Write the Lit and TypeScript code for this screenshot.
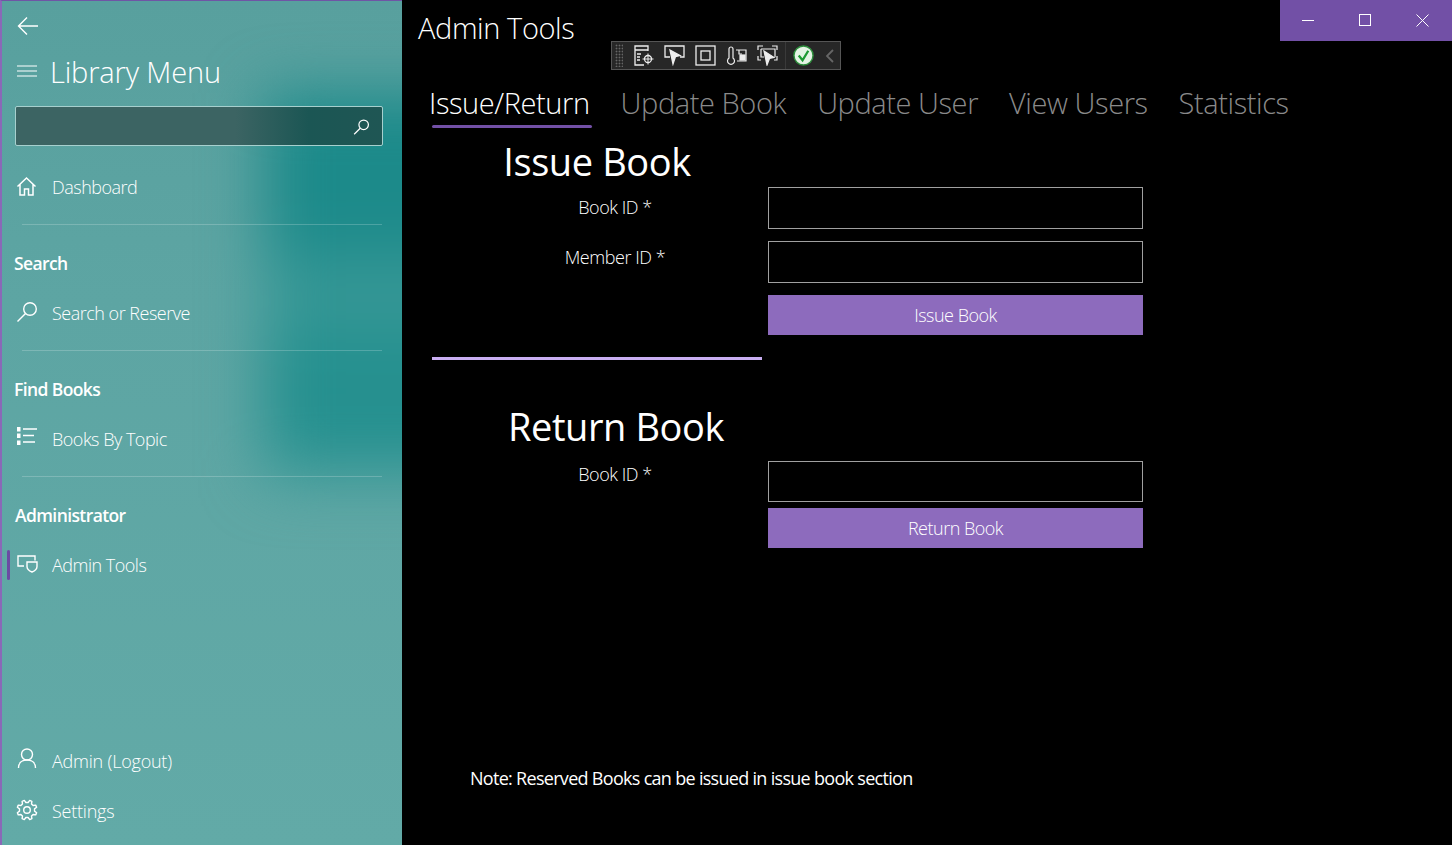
import { LitElement, html, css, svg } from "lit";
import { customElement } from "lit/decorators.js";

const icon = (body: unknown, size = 22, vb = 22) => html`<svg class="ic" width=${size} height=${size} viewBox="0 0 ${vb} ${vb}" fill="none" stroke="currentColor" stroke-width="1.4">${body}</svg>`;

const gearPath = () => {
  const cx = 12, cy = 10, pts: string[] = [];
  const n = 8;
  for (let i = 0; i < n; i++) {
    const a = (i / n) * Math.PI * 2 + Math.PI / 8;
    const s = Math.PI / n;
    const p = (ang: number, r: number) => `${(cx + r * Math.cos(ang)).toFixed(2)} ${(cy + r * Math.sin(ang)).toFixed(2)}`;
    pts.push(p(a - s * 0.62, 7.6), p(a - s * 0.3, 10), p(a + s * 0.3, 10), p(a + s * 0.62, 7.6));
  }
  return "M" + pts.join("L") + "Z";
};

const home = svg`<path d="M2.500 10.500 11.500 2l9 8.500M5 8.500V19h4.500v-6h4v6H18V8.500" stroke-width="1.500"/>`;
const search = svg`<circle cx="15" cy="7" r="6.300"/><path d="M10.500 11.500 2.500 19.500"/>`;
const list = svg`<path d="M2 -1h3.500v4.500H2zM2 5.500h3.500V10H2zM2 12.500h3.500V17H2z" fill="currentColor" stroke="none"/><path d="M8 1h14M8 7.500h11M8 14h12"/>`;
const shield = svg`<path d="M9 12H3V2h17v4.500M12 8h10v4.500c0 3-2.700 4.600-5 5.500-2.300-.9-5-2.500-5-5.500z"/>`;
const user = svg`<circle cx="12" cy="4.500" r="5.500"/><path d="M3.500 18c0-5 3.500-8 8.500-8s8.500 3 8.500 8"/>`;
const gear = svg`<path d=${gearPath()} stroke-linejoin="round"/><circle cx="12" cy="10" r="3.300"/>`;

@customElement("app-root")
export class AppRoot extends LitElement {
  static styles = css`
    :host { display: block; width: 1452px; height: 845px; overflow: hidden; background: #000; font-family: "Open Sans", "Noto Sans", sans-serif; color: #fff; }
    .app { display: grid; grid-template-columns: 402px 1fr; height: 845px; position: relative; }
    .side { box-sizing: border-box; height: 845px; border-left: 2px solid #8a68b8; border-top: 1px solid #6f55a5; display: flex; flex-direction: column; color: #fff; position: relative; overflow: hidden;
      background: linear-gradient(180deg, #58a09e 0, #5da5a3 300px, #62aaa7 845px); }
    .side::before { content: ""; position: absolute; left: 262px; top: 92px; width: 230px; height: 385px; filter: blur(30px);
      background: linear-gradient(180deg, #1c8a8a 0 36%, #3c9a98 52%, #25908f 66%, #25908f 90%, #3c9a98 100%); }
    .side > * { position: relative; }
    .back { height: 48px; padding: 13px 0 0 14px; box-sizing: border-box; }
    .ttl { display: flex; align-items: center; height: 44px; padding-left: 14px; gap: 10px; font-size: 29px; font-weight: 300; letter-spacing: -.15px; }
    .searchbox { box-sizing: border-box; margin: 13px 0 0 13px; width: 368px; height: 40px; border: 1px solid #a7d0ce; border-radius: 2px; background: linear-gradient(90deg, #3c6463, #3c6463 60%, #1b5654 80%, #1f5654); display: flex; align-items: center; justify-content: flex-end; padding-right: 11px; }
    .item { display: flex; align-items: center; height: 40px; padding-left: 13px; gap: 15px; font-size: 18px; font-weight: 300; letter-spacing: -.5px; position: relative; }
    .item.first { margin-top: 21px; }
    .item.wide { letter-spacing: -.22px; }
    .ic { flex: none; overflow: visible; }
    .div { height: 1px; margin: 17px 20px 0 20px; background: rgba(255,255,255,.2); }
    .hdr { font-size: 17.500px; font-weight: 600; letter-spacing: -.6px; height: 24px; line-height: 24px; padding-left: 12px; margin: 26px 0 18px; }
    .hdr.a { padding-left: 13px; }
    .sel { position: absolute; left: 5px; top: 5px; width: 3px; height: 30px; background: #6b4ba3; border-radius: 2px; }
    .foot { margin-top: auto; padding-bottom: 14px; display: flex; flex-direction: column; gap: 10px; }
    .main { position: relative; display: flex; flex-direction: column; min-width: 0; }
    .top { display: flex; justify-content: space-between; height: 58px; }
    .page { font-size: 29px; font-weight: 300; letter-spacing: -.4px; padding: 8px 0 0 16px; }
    .win { width: 172px; height: 41px; background: #7250a6; display: flex; align-items: center; color: #fff; }
    .win span { width: 57px; display: flex; justify-content: center; }
    .tools { position: absolute; left: 209px; top: 41px; width: 230px; height: 29px; box-sizing: border-box; border: 1px solid #555; background: #272727; display: flex; align-items: center; gap: 10px; padding-left: 3px; color: #eee; }
    .tools svg { flex: none; }
    .grip { width: 8px; height: 23px; background-image: radial-gradient(circle, #666 0 .8px, transparent 1.1px); background-size: 3px 3px; }
    .sep { width: 1px; height: 27px; background: #3a3a3a; margin-left: -3px; }
    .check { margin-left: -3px; }
    .chev { margin-left: 1px; }
    .tabs { display: flex; padding-left: 27px; gap: 31px; font-size: 29px; font-weight: 300; letter-spacing: -.42px; height: 56px; margin-top: 21px; color: #8a8a8a; }
    .tab { height: 48px; position: relative; line-height: 48px; white-space: nowrap; }
    .tab.on { color: #fff; }
    .tab.on::after { content: ""; position: absolute; left: 3px; right: -2px; bottom: -1px; height: 3px; background: #7250a6; border-radius: 2px; }
    .form { display: grid; grid-template-columns: 336px 375px; padding-left: 30px; }
    .h1 { font-size: 38px; font-weight: 400; letter-spacing: -.4px; text-align: center; width: 330px; line-height: 52px; grid-column: 1 / 3; }
    .h1.ret { padding-left: 19px; }
    .lab { font-size: 18px; font-weight: 300; letter-spacing: -.45px; text-align: center; width: 336px; box-sizing: border-box; padding-left: 30px; margin-top: 8px; white-space: nowrap; }
    .lab.m { margin-top: 16px; }
    .lab.r { margin-top: 10px; }
    .in { box-sizing: border-box; border: 1px solid #a0a0a0; height: 42px; width: 375px; background: #000; }
    .in.g { margin-top: 12px; }
    .in.r { height: 41px; margin-top: 9px; }
    .btn { background: #8d6bbd; height: 40px; width: 375px; display: flex; align-items: center; justify-content: center; font-size: 18px; font-weight: 300; letter-spacing: -.5px; margin-top: 12px; }
    .btn.r { margin-top: 6px; }
    .rule { width: 330px; height: 3px; background: #c9aef2; margin: 22px 0 0 30px; }
    .form.two { margin-top: 40px; }
    .note { position: absolute; left: 68px; top: 766px; font-size: 18px; font-weight: 400; letter-spacing: -.7px; }
  `;
  render() {
    return html`<div class="app">
      <aside class="side">
        <div class="back">${icon(svg`<path d="M3 12h19M11 3.500 2.500 12l8.500 8.500"/>`, 24, 24)}</div>
        <div class="ttl">${icon(svg`<path d="M1 7h20M1 12h20M1 17h20" stroke-width="1"/>`, 24, 24)}<span>Library Menu</span></div>
        <div class="searchbox">${icon(svg`<circle cx="13.500" cy="9" r="5.500"/><path d="M9.500 13 2.500 20"/>`, 19, 22)}</div>
        <div class="item first">${icon(home)}<span>Dashboard</span></div>
        <div class="div"></div>
        <div class="hdr">Search</div>
        <div class="item">${icon(search)}<span>Search or Reserve</span></div>
        <div class="div"></div>
        <div class="hdr">Find Books</div>
        <div class="item">${icon(list)}<span>Books By Topic</span></div>
        <div class="div"></div>
        <div class="hdr a">Administrator</div>
        <div class="item"><i class="sel"></i>${icon(shield)}<span>Admin Tools</span></div>
        <div class="foot">
          <div class="item wide">${icon(user)}<span>Admin (Logout)</span></div>
          <div class="item wide">${icon(gear)}<span>Settings</span></div>
        </div>
      </aside>
      <main class="main">
        <div class="top">
          <div class="page">Admin Tools</div>
          <div class="win">
            <span><svg width="13" height="13" viewBox="0 0 13 13" stroke="#fff" fill="none"><path d="M0 6.500h12"/></svg></span>
            <span><svg width="13" height="13" viewBox="0 0 13 13" stroke="#fff" fill="none"><rect x=".5" y=".5" width="11" height="11"/></svg></span>
            <span><svg width="13" height="13" viewBox="0 0 13 13" stroke="#fff" fill="none"><path d="M.5.500l12 12M12.500.500l-12 12"/></svg></span>
          </div>
        </div>
        <div class="tools">
          <div class="grip"></div>
          <svg width="21" height="21" viewBox="0 0 21 21" fill="none" stroke="currentColor" stroke-width="1.300"><path d="M15 6V1H2v19h9M2 5h13M4 9h4M4 12h3M4 15h3"/><circle cx="15" cy="14" r="3.500"/><path d="M15 8.500v11M9.500 14h11" stroke-width="1"/></svg>
          <svg width="21" height="21" viewBox="0 0 21 21" fill="none" stroke="currentColor" stroke-width="1.300"><path d="M6 12H1V1h19v11h-4"/><path d="M6 5l10 5.500-4.500 1L9 19z" fill="currentColor"/></svg>
          <svg width="21" height="21" viewBox="0 0 21 21" fill="none" stroke="currentColor" stroke-width="1.300"><rect x="1" y="1" width="19" height="19"/><rect x="6" y="6" width="9" height="9"/></svg>
          <svg width="21" height="21" viewBox="0 0 21 21" fill="none" stroke="currentColor" stroke-width="1.200"><path d="M3 13V4a2 2 0 0 1 4 0v9a3.500 3.500 0 1 1-4 0zM10 5h10v11h-9M13 5v4h3"/><rect x="14" y="10" width="5" height="5" fill="currentColor"/></svg>
          <svg width="21" height="21" viewBox="0 0 21 21" fill="none" stroke="currentColor" stroke-width="1.200"><path d="M1 5V1h5M15 1h5v4M1 11v4h3M20 11v4h-3M4 4h14v8M4 4v8h3"/><path d="M7 6l10 6.500-4.500 1L10 20z" fill="currentColor"/></svg>
          <div class="sep"></div>
          <svg class="check" width="21" height="21" viewBox="0 0 22 22"><circle cx="11" cy="11" r="10" fill="#e4f4e4" stroke="#2d8f3c" stroke-width="1.500"/><path d="M6 11l4 5 6-10" fill="none" stroke="#1d9a33" stroke-width="2.400"/></svg>
          <svg class="chev" width="10" height="16" viewBox="0 0 10 16" fill="none" stroke="#666" stroke-width="1.800"><path d="M8 2 2 8l6 6"/></svg>
        </div>
        <div class="tabs">
          <div class="tab on">Issue/Return</div><div class="tab">Update Book</div><div class="tab">Update User</div><div class="tab">View Users</div><div class="tab">Statistics</div>
        </div>
        <div class="form">
          <div class="h1">Issue Book</div>
          <div class="lab">Book ID *</div><div class="in"></div>
          <div class="lab m">Member ID *</div><div class="in g"></div>
          <div></div><div class="btn">Issue Book</div>
        </div>
        <div class="rule"></div>
        <div class="form two">
          <div class="h1 ret">Return Book</div>
          <div class="lab r">Book ID *</div><div class="in r"></div>
          <div></div><div class="btn r">Return Book</div>
        </div>
        <div class="note">Note: Reserved Books can be issued in issue book section</div>
      </main>
    </div>`;
  }
}
